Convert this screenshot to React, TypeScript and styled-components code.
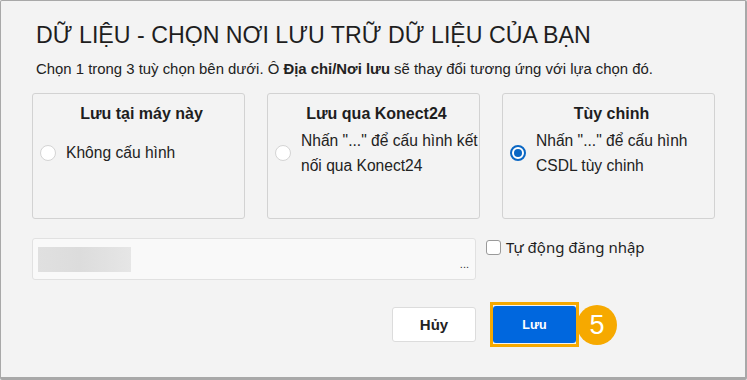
import React, { useState } from "react";
import styled, { createGlobalStyle } from "styled-components";

const GlobalStyle = createGlobalStyle`
    html, body {
        margin: 0;
        padding: 0;
        background: #f3f3f3;
    }
    * {
        box-sizing: border-box;
    }
`;

const Frame = styled('div')`
    width: 747px;
    height: 380px;
    background: #f3f3f3;
    border: 1px solid #a8a8a8;
    border-right-width: 2px;
    border-bottom-width: 3px;
    border-radius: 2px;
    padding: 21px 31px 0 31px;
    font-family: "Liberation Sans", Arial, sans-serif;
    color: #222;
`;

const Header = styled('div')`
    padding-left: 4px;
`;

const Title = styled('h1')`
    margin: 0;
    font-size: 23.2px;
    line-height: 26px;
    font-weight: normal;
    color: #1e1e1e;
`;

const Hint = styled('p')`
    margin: 11px 0 0 0;
    font-size: 14.9px;
    line-height: 20px;

    b {
        font-weight: bold;
    }
`;

const Cards = styled('div')`
    margin-top: 14px;
    display: grid;
    grid-template-columns: repeat(3, 213px);
    column-gap: 22px;
`;

const Card = styled('div')`
    height: 126px;
    border: 1px solid #d2d2d2;
    border-radius: 3px;
    padding: 10px 1px 0 7px;
    cursor: pointer;
`;

const CardTitle = styled('div')`
    text-align: center;
    font-size: 16px;
    line-height: 20px;
    font-weight: bold;
    color: #1e1e1e;
`;

const Option = styled('div')`
    margin-top: 3px;
    height: 52px;
    display: flex;
    align-items: center;
    gap: 10px;
`;

const Radio = styled('span')<{ $checked?: boolean }>`
    flex: none;
    width: 16px;
    height: 16px;
    border-radius: 50%;
    background: #fff;
    border: ${p => (p.$checked ? '2px solid #0a67c4' : '1px solid #d4d4d4')};
    display: flex;
    align-items: center;
    justify-content: center;

    &::after {
        content: '';
        display: ${p => (p.$checked ? 'block' : 'none')};
        width: 8px;
        height: 8px;
        border-radius: 50%;
        background: #0a67c4;
    }
`;

const OptionText = styled('span')`
    font-size: 15.6px;
    line-height: 25.5px;
    color: #222;
    white-space: nowrap;
`;

const PathRow = styled('div')`
    margin-top: 19px;
    display: flex;
    align-items: flex-start;
    gap: 10px;
`;

const PathBox = styled('div')`
    position: relative;
    width: 444px;
    height: 42px;
    background: #f9f9f9;
    border: 1px solid #e1e1e1;
    border-radius: 3px;
    padding: 7px 5px;
    display: flex;
    align-items: center;
    justify-content: space-between;
`;

const Blurred = styled('div')`
    width: 93px;
    height: 25px;
    background: linear-gradient(90deg, #e0e0e0 0%, #dcdcdc 45%, #e6e6e6 100%);
`;

const More = styled('span')`
    align-self: flex-end;
    margin-right: 1px;
    font-size: 11px;
    line-height: 16px;
    color: #333;
`;

const CheckLabel = styled('label')`
    display: flex;
    align-items: center;
    gap: 5px;
    margin-top: 1px;
    font-family: "Noto Sans", "Open Sans", sans-serif;
    font-size: 15px;
    line-height: 16px;
    color: #1e1e1e;
`;

const CheckBox = styled('span')`
    width: 15px;
    height: 15px;
    background: #fff;
    border: 1px solid #9a9a9a;
    border-radius: 3px;
`;

const Actions = styled('div')`
    margin-top: 22px;
    margin-right: 135px;
    display: flex;
    justify-content: flex-end;
    align-items: center;
    gap: 14px;
`;

const Button = styled('button')<{ $primary?: boolean }>`
    height: ${p => (p.$primary ? '37px' : '35px')};
    width: ${p => (p.$primary ? '83px' : '84px')};
    border-radius: 3px;
    border: ${p => (p.$primary ? 'none' : '1px solid #dcdcdc')};
    background: ${p => (p.$primary ? '#0067de' : '#fff')};
    color: ${p => (p.$primary ? '#fff' : '#222')};
    font-family: "Liberation Sans", Arial, sans-serif;
    font-weight: bold;
    font-size: ${p => (p.$primary ? '12.5px' : '15px')};
    cursor: pointer;
`;

const Highlight = styled('span')`
    position: relative;
    display: inline-flex;
    padding: 1px 0;
    border: 3px solid #f6a900;
`;

const Badge = styled('span')`
    position: absolute;
    left: calc(100% + 1px);
    top: 50%;
    transform: translateY(-50%);
    width: 40px;
    height: 40px;
    border-radius: 50%;
    background: #f6a900;
    color: #fff;
    font-family: "Liberation Sans", Arial, sans-serif;
    font-size: 27px;
    line-height: 40px;
    text-align: center;
`;

const options = [
    { title: 'Lưu tại máy này', lines: ['Không cấu hình'] },
    { title: 'Lưu qua Konect24', lines: ['Nhấn "..." để cấu hình kết', 'nối qua Konect24'] },
    { title: 'Tùy chinh', lines: ['Nhấn "..." để cấu hình', 'CSDL tùy chinh'] },
];

const App = () => {
    const [selected, setSelected] = useState<number>(2);

    return (
        <>
            <GlobalStyle />
            <Frame>
                <Header>
                    <Title>DỮ LIỆU - CHỌN NƠI LƯU TRỮ DỮ LIỆU CỦA BẠN</Title>
                    <Hint>
                        Chọn 1 trong 3 tuỳ chọn bên dưới. Ô <b>Địa chỉ/Nơi lưu</b> sẽ thay đổi tương ứng với lựa chọn đó.
                    </Hint>
                </Header>

                <Cards>
                    {options.map((opt, i) => (
                        <Card key={opt.title} onClick={() => setSelected(i)}>
                            <CardTitle>{opt.title}</CardTitle>
                            <Option>
                                <Radio $checked={selected === i} />
                                <OptionText>
                                    {opt.lines.map((l, j) => (
                                        <React.Fragment key={j}>
                                            {j > 0 && <br />}
                                            {l}
                                        </React.Fragment>
                                    ))}
                                </OptionText>
                            </Option>
                        </Card>
                    ))}
                </Cards>

                <PathRow>
                    <PathBox>
                        <Blurred />
                        <More>...</More>
                    </PathBox>
                    <CheckLabel>
                        <CheckBox />
                        Tự động đăng nhập
                    </CheckLabel>
                </PathRow>

                <Actions>
                    <Button>Hủy</Button>
                    <Highlight>
                        <Button $primary>Lưu</Button>
                        <Badge>5</Badge>
                    </Highlight>
                </Actions>
            </Frame>
        </>
    );
};

export default App;
